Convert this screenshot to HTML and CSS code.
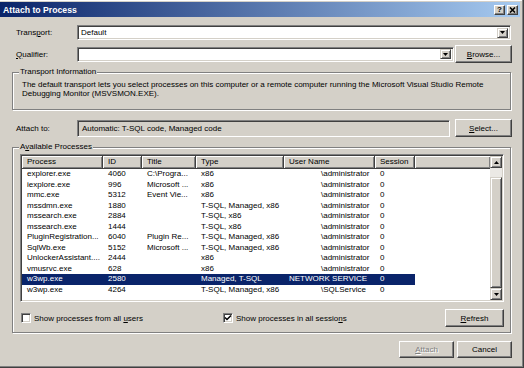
FILE: index.html
```html
<!DOCTYPE html>
<html lang="en">
<head>
    <meta charset="UTF-8">
    <title>Attach to Process</title>
    <link rel="stylesheet" href="styles.css">
</head>
<body>
<div class="window">
    <div class="titlebar">
        <span class="title">Attach to Process</span>
        <div class="caption-buttons">
            <span class="cap-btn">?</span>
            <span class="cap-btn"><svg width="7" height="6" viewBox="0 0 7 6"><path d="M1 0.5 L6 5.5 M6 0.5 L1 5.5" stroke="#000" stroke-width="1.6"/></svg></span>
        </div>
    </div>

    <div class="content">
        <div class="row row-transport">
            <label class="field-label">Trans<u>p</u>ort:</label>
            <div class="combo">
                <span class="combo-text">Default</span>
                <span class="drop"><svg width="5" height="3" viewBox="0 0 5 3"><polygon points="0,0 5,0 2.5,3" fill="#000"/></svg></span>
            </div>
        </div>

        <div class="row row-button">
            <label class="field-label"><u>Q</u>ualifier:</label>
            <div class="combo">
                <span class="combo-text"></span>
                <span class="drop"><svg width="5" height="3" viewBox="0 0 5 3"><polygon points="0,0 5,0 2.5,3" fill="#000"/></svg></span>
            </div>
            <button class="btn btn-side"><u>B</u>rowse...</button>
        </div>

        <fieldset class="group group-info">
            <legend>Transport Information</legend>
            <p class="info-text">The default transport lets you select processes on this computer or a remote computer running the Microsoft Visual Studio Remote<br>Debugging Monitor (MSVSMON.EXE).</p>
        </fieldset>

        <div class="row row-button row-attach">
            <label class="field-label">Attach to:</label>
            <div class="textbox">Automatic: T-SQL code, Managed code</div>
            <button class="btn btn-side"><u>S</u>elect...</button>
        </div>

        <fieldset class="group group-processes">
            <legend>A<u>v</u>ailable Processes</legend>
            <div class="listview">
                <div class="lv-main">
                    <div class="lv-header">
                        <span class="hd c-process">Process</span>
                        <span class="hd c-id">ID</span>
                        <span class="hd c-title">Title</span>
                        <span class="hd c-type">Type</span>
                        <span class="hd c-user">User Name</span>
                        <span class="hd c-session">Session</span>
                        <span class="hd hd-fill"></span>
                    </div>
                    <div class="lv-body">
                        <div class="lv-row"><span class="c-process">explorer.exe</span><span class="c-id">4060</span><span class="c-title">C:\Progra...</span><span class="c-type">x86</span><span class="c-user masked">\administrator</span><span class="c-session">0</span></div>
                        <div class="lv-row"><span class="c-process">iexplore.exe</span><span class="c-id">996</span><span class="c-title">Microsoft ...</span><span class="c-type">x86</span><span class="c-user masked">\administrator</span><span class="c-session">0</span></div>
                        <div class="lv-row"><span class="c-process">mmc.exe</span><span class="c-id">5312</span><span class="c-title">Event Vie...</span><span class="c-type">x86</span><span class="c-user masked">\administrator</span><span class="c-session">0</span></div>
                        <div class="lv-row"><span class="c-process">mssdmn.exe</span><span class="c-id">1880</span><span class="c-title"></span><span class="c-type">T-SQL, Managed, x86</span><span class="c-user masked">\administrator</span><span class="c-session">0</span></div>
                        <div class="lv-row"><span class="c-process">mssearch.exe</span><span class="c-id">2884</span><span class="c-title"></span><span class="c-type">T-SQL, x86</span><span class="c-user masked">\administrator</span><span class="c-session">0</span></div>
                        <div class="lv-row"><span class="c-process">mssearch.exe</span><span class="c-id">1444</span><span class="c-title"></span><span class="c-type">T-SQL, x86</span><span class="c-user masked">\administrator</span><span class="c-session">0</span></div>
                        <div class="lv-row"><span class="c-process">PluginRegistration...</span><span class="c-id">6040</span><span class="c-title">Plugin Re...</span><span class="c-type">T-SQL, Managed, x86</span><span class="c-user masked">\administrator</span><span class="c-session">0</span></div>
                        <div class="lv-row"><span class="c-process">SqlWb.exe</span><span class="c-id">5152</span><span class="c-title">Microsoft ...</span><span class="c-type">T-SQL, Managed, x86</span><span class="c-user masked">\administrator</span><span class="c-session">0</span></div>
                        <div class="lv-row"><span class="c-process">UnlockerAssistant....</span><span class="c-id">2444</span><span class="c-title"></span><span class="c-type">x86</span><span class="c-user masked">\administrator</span><span class="c-session">0</span></div>
                        <div class="lv-row"><span class="c-process">vmusrvc.exe</span><span class="c-id">628</span><span class="c-title"></span><span class="c-type">x86</span><span class="c-user masked">\administrator</span><span class="c-session">0</span></div>
                        <div class="lv-row selected"><span class="c-process">w3wp.exe</span><span class="c-id">2580</span><span class="c-title"></span><span class="c-type">Managed, T-SQL</span><span class="c-user">NETWORK SERVICE</span><span class="c-session">0</span></div>
                        <div class="lv-row"><span class="c-process">w3wp.exe</span><span class="c-id">4264</span><span class="c-title"></span><span class="c-type">T-SQL, Managed, x86</span><span class="c-user masked">\SQLService</span><span class="c-session">0</span></div>
                    </div>
                </div>
                <div class="scrollbar">
                    <span class="sb-btn"><svg width="5" height="3" viewBox="0 0 5 3"><polygon points="0,3 5,3 2.5,0" fill="#000"/></svg></span>
                    <span class="sb-track"><span class="sb-thumb"></span></span>
                    <span class="sb-btn"><svg width="5" height="3" viewBox="0 0 5 3"><polygon points="0,0 5,0 2.5,3" fill="#000"/></svg></span>
                </div>
            </div>

            <div class="options">
                <label class="check-option first"><span class="checkbox"></span><span>Show processes from all <u>u</u>sers</span></label>
                <label class="check-option"><span class="checkbox"><svg width="8" height="8" viewBox="0 0 8 8"><path d="M1 3.5 L3 5.5 L7 1.5" fill="none" stroke="#000" stroke-width="1.5"/></svg></span><span>Show processes in all sessio<u>n</u>s</span></label>
                <button class="btn btn-refresh"><u>R</u>efresh</button>
            </div>
        </fieldset>

        <div class="footer">
            <button class="btn btn-footer" disabled><u>A</u>ttach</button>
            <button class="btn btn-footer">Cancel</button>
        </div>
    </div>
</div>
</body>
</html>
```

FILE: styles.css
```css
body {
    margin: 0;
    font-family: "Liberation Sans", Arial, sans-serif;
    font-size: 8px;
    color: #000;
}
.window {
    width: 524px;
    height: 368px;
    box-sizing: border-box;
    background-color: #d4d0c8;
    padding: 2px 3px 0 0;
    border-right: 1px solid #404040;
    border-bottom: 1px solid #404040;
    box-shadow: inset -1px -1px #808080, inset 0 1px #fff;
}

/* title bar */
.titlebar {
    height: 15px;
    display: flex;
    align-items: center;
    background: linear-gradient(to right, #0a246a, #a6caf0);
}
.title {
    padding-left: 3px;
    color: #fff;
    font-weight: bold;
    font-size: 8.7px;
}
.caption-buttons {
    margin-left: auto;
    margin-right: 2px;
    display: flex;
    gap: 2px;
}
.cap-btn {
    width: 11px;
    height: 10px;
    box-sizing: border-box;
    display: flex;
    align-items: center;
    justify-content: center;
    background-color: #d4d0c8;
    border: 1px solid;
    border-color: #fff #404040 #404040 #fff;
    box-shadow: inset -1px -1px #808080;
    font-weight: bold;
    font-size: 8px;
    line-height: 1;
}

/* rows */
.content {
    padding: 8px 8px 0 12px;
}
.row {
    display: flex;
    align-items: center;
}
.row-transport {
    height: 15px;
}
.row-button {
    height: 18px;
    margin-top: 5px;
}
.row-attach {
    margin-top: 9px;
}
.field-label {
    width: 65px;
    padding-left: 4px;
    box-sizing: border-box;
    flex-shrink: 0;
}
.combo {
    flex: 1;
    height: 15px;
    margin-right: 1px;
    box-sizing: border-box;
    display: flex;
    align-items: center;
    background-color: #fff;
    border: 1px solid;
    border-color: #808080 #fff #fff #808080;
    box-shadow: inset 1px 1px #404040, inset -1px -1px #d4d0c8;
    padding: 0 2px 0 3px;
}
.combo-text {
    flex: 1;
}
.drop, .sb-btn {
    width: 11px;
    height: 10px;
    box-sizing: border-box;
    display: flex;
    align-items: center;
    justify-content: center;
    background-color: #d4d0c8;
    border: 1px solid;
    border-color: #d4d0c8 #404040 #404040 #d4d0c8;
    box-shadow: inset 1px 1px #fff, inset -1px -1px #808080;
}
.textbox {
    flex: 1;
    height: 17px;
    margin-right: 5px;
    box-sizing: border-box;
    display: flex;
    align-items: center;
    padding-left: 4px;
    border: 1px solid;
    border-color: #808080 #fff #fff #808080;
    box-shadow: inset 1px 1px #404040, inset -1px -1px #d4d0c8;
}

/* buttons */
.btn {
    font-family: inherit;
    font-size: 8px;
    color: #000;
    background-color: #d4d0c8;
    box-sizing: border-box;
    border: 1px solid;
    border-color: #fff #404040 #404040 #fff;
    box-shadow: inset -1px -1px #808080;
    padding: 0;
}
.btn:disabled {
    color: #808080;
    text-shadow: 1px 1px #fff;
}
.btn-side {
    width: 57px;
    height: 18px;
}

/* group boxes */
.group {
    margin: 0 1px 0 0;
    min-width: 0;
    border: 1px solid #808080;
    box-shadow: inset 1px 1px #fff, 1px 1px #fff;
}
.group legend {
    padding: 0 1px;
    margin-left: -1px;
    line-height: 10px;
    background-color: #d4d0c8;
}
.group-info {
    margin-top: 4px;
    padding: 0 6px 11px 7px;
}
.info-text {
    margin: 3px 0 0 2px;
    line-height: 9px;
}
.group-processes {
    margin-top: 5px;
    padding: 0 6px 5px 7px;
}

/* list view */
.listview {
    margin-top: 2px;
    height: 148px;
    box-sizing: border-box;
    display: flex;
    background-color: #fff;
    border: 1px solid;
    border-color: #808080 #fff #fff #808080;
    box-shadow: inset 1px 1px #404040, inset -1px -1px #d4d0c8;
    padding: 1px;
}
.lv-main {
    flex: 1;
    overflow: hidden;
}
.lv-header {
    display: flex;
    height: 13px;
}
.hd {
    height: 13px;
    box-sizing: border-box;
    padding-left: 5px;
    line-height: 12px;
    background-color: #d4d0c8;
    border-right: 1px solid #404040;
    border-bottom: 1px solid #404040;
    box-shadow: inset 1px 1px #fff, inset -1px -1px #808080;
    white-space: nowrap;
}
.hd-fill {
    flex: 1;
    border-right: none;
}
.lv-row {
    display: flex;
    width: 393px;
    height: 10.5px;
    line-height: 10.5px;
}
.lv-row span {
    box-sizing: border-box;
    padding-left: 5px;
    white-space: nowrap;
    overflow: hidden;
}
.lv-row .masked {
    padding-left: 37px;
}
.lv-row.selected {
    background-color: #0a246a;
    color: #fff;
}
.c-process { width: 81px; }
.c-id { width: 39px; }
.c-title { width: 54px; }
.c-type { width: 88px; }
.c-user { width: 91px; }
.c-session { width: 40px; }

/* scrollbar */
.scrollbar {
    width: 12px;
    display: flex;
    flex-direction: column;
}
.scrollbar .sb-btn {
    width: 12px;
    height: 12px;
}
.sb-track {
    flex: 1;
    display: flex;
    flex-direction: column;
    padding-top: 9px;
    background-color: #ebe9e5;
}
.sb-thumb {
    flex: 1;
    box-sizing: border-box;
    background-color: #d4d0c8;
    border: 1px solid;
    border-color: #d4d0c8 #404040 #404040 #d4d0c8;
    box-shadow: inset 1px 1px #fff, inset -1px -1px #808080;
}

/* options */
.options {
    margin-top: 7px;
    height: 18px;
    display: flex;
    align-items: center;
    padding-left: 1px;
}
.check-option {
    display: flex;
    align-items: center;
}
.check-option.first {
    width: 202px;
}
.checkbox {
    width: 10px;
    height: 10px;
    box-sizing: border-box;
    margin-right: 3px;
    display: flex;
    align-items: center;
    justify-content: center;
    background-color: #fff;
    border: 1px solid;
    border-color: #808080 #fff #fff #808080;
    box-shadow: inset 1px 1px #404040, inset -1px -1px #d4d0c8;
}
.btn-refresh {
    margin-left: auto;
    width: 59px;
    height: 18px;
}

/* footer */
.footer {
    margin-top: 8px;
    display: flex;
    justify-content: flex-end;
    gap: 3px;
}
.btn-footer {
    width: 55px;
    height: 17px;
}
```
